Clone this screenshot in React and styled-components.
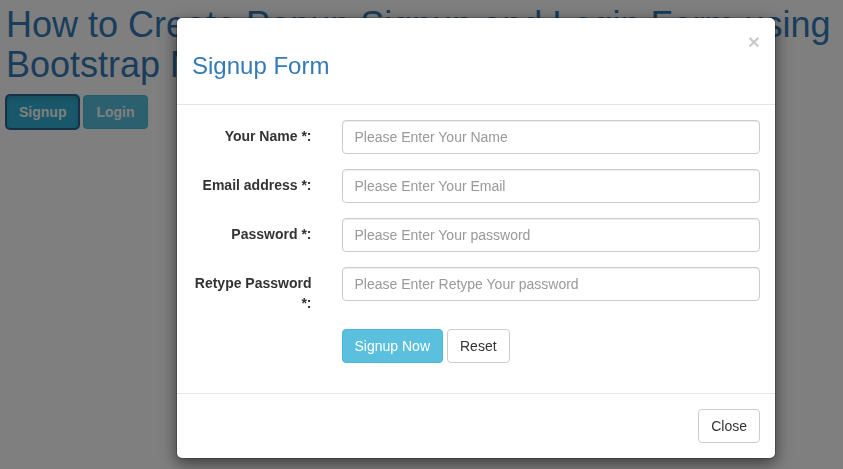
import React from 'react';
import styled, { createGlobalStyle } from 'styled-components';

const GlobalStyle = createGlobalStyle`
  * { box-sizing: border-box; }
  html, body {
    margin: 0;
    padding: 0;
    background: #fff;
    font-family: "Liberation Sans", Arial, Helvetica, sans-serif;
    font-size: 14px;
    line-height: 1.42857;
    color: #333;
    overflow: hidden;
  }
`;

const Page = styled.div`
  padding: 0 6px;
  height: 469px;
`;

const PageTitle = styled.h1`
  font-size: 36px;
  font-weight: 500;
  line-height: 1.1;
  color: #337ab7;
  margin: 5px 0 11px;
`;

const TopButtons = styled.div`
  display: flex;
  gap: 4px;
`;

const Btn = styled.button`
  font-family: inherit;
  font-size: 14px;
  line-height: 20px;
  height: 34px;
  padding: 6px 12px;
  border-radius: 4px;
  border: 1px solid #ccc;
  background: #fff;
  color: #333;
  font-weight: ${(p) => (p.$bold ? 'bold' : 'normal')};
  cursor: pointer;
`;

const InfoBtn = styled(Btn)`
  background: ${(p) => (p.$active ? '#31b0d5' : '#5bc0de')};
  border-color: ${(p) => (p.$active ? '#1b6d85' : '#46b8da')};
  color: #fff;
  box-shadow: ${(p) => (p.$active ? 'inset 0 3px 5px rgba(0,0,0,.125), 0 0 0 1px #3b5b9a' : 'none')};
`;

const Backdrop = styled.div`
  position: fixed;
  inset: 0;
  background: rgba(0, 0, 0, 0.5);
`;

const Dialog = styled.div`
  position: fixed;
  top: 17px;
  left: 176px;
  width: 600px;
  background: #fff;
  border: 1px solid rgba(0, 0, 0, 0.2);
  border-radius: 6px;
  box-shadow: 0 5px 15px rgba(0, 0, 0, 0.5);
  background-clip: padding-box;
`;

const Header = styled.div`
  padding: 15px;
  border-bottom: 1px solid #e5e5e5;
  display: flex;
  justify-content: space-between;
  align-items: flex-start;
`;

const Title = styled.h3`
  margin: 20px 0 10px;
  font-size: 24px;
  font-weight: 500;
  line-height: 1.1;
  color: #337ab7;
`;

const CloseX = styled.button`
  border: 0;
  background: transparent;
  padding: 0;
  margin-top: -2px;
  font-family: inherit;
  font-size: 21px;
  font-weight: bold;
  line-height: 1;
  color: #000;
  opacity: 0.2;
  text-shadow: 0 1px 0 #fff;
  cursor: pointer;
`;

const Body = styled.div`
  padding: 15px;
`;

const Form = styled.form`
  margin: 0 -15px;
`;

const Group = styled.div`
  display: flex;
  align-items: flex-start;
  margin-bottom: 15px;
`;

const Label = styled.label`
  width: 25%;
  padding: 7px 15px 0;
  text-align: right;
  font-weight: bold;
  color: #333;
`;

const Field = styled.div`
  width: 75%;
  padding: 0 15px;
  margin-left: ${(p) => (p.$offset ? '25%' : '0')};
  display: flex;
  gap: 4px;
`;

const Input = styled.input`
  display: block;
  width: 100%;
  height: 34px;
  padding: 6px 12px;
  font-family: inherit;
  font-size: 14px;
  color: #555;
  background: #fff;
  border: 1px solid #ccc;
  border-radius: 4px;
  box-shadow: inset 0 1px 1px rgba(0, 0, 0, 0.075);
  &::placeholder { color: #999; }
`;

const Footer = styled.div`
  padding: 15px;
  border-top: 1px solid #e5e5e5;
  display: flex;
  justify-content: flex-end;
`;

const fields = [
  { label: 'Your Name *:', type: 'text', ph: 'Please Enter Your Name' },
  { label: 'Email address *:', type: 'email', ph: 'Please Enter Your Email' },
  { label: 'Password *:', type: 'password', ph: 'Please Enter Your password' },
  { label: 'Retype Password *:', type: 'password', ph: 'Please Enter Retype Your password' },
];

export default function App() {
  return (
    <>
      <GlobalStyle />
      <Page>
        <PageTitle>How to Create Popup Signup and Login Form using Bootstrap Modal</PageTitle>
        <TopButtons>
          <InfoBtn $bold $active>Signup</InfoBtn>
          <InfoBtn $bold>Login</InfoBtn>
        </TopButtons>
      </Page>
      <Backdrop />
      <Dialog>
        <Header>
          <Title>Signup Form</Title>
          <CloseX aria-label="Close">×</CloseX>
        </Header>
        <Body>
          <Form onSubmit={(e) => e.preventDefault()}>
            {fields.map((f) => (
              <Group key={f.label}>
                <Label>{f.label}</Label>
                <Field>
                  <Input type={f.type} placeholder={f.ph} />
                </Field>
              </Group>
            ))}
            <Group>
              <Field $offset>
                <InfoBtn type="submit">Signup Now</InfoBtn>
                <Btn type="reset">Reset</Btn>
              </Field>
            </Group>
          </Form>
        </Body>
        <Footer>
          <Btn>Close</Btn>
        </Footer>
      </Dialog>
    </>
  );
}
